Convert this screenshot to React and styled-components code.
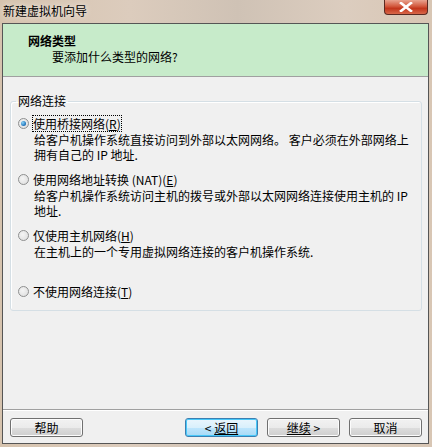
import React, { useState } from "react";
import styled, { createGlobalStyle } from "styled-components";

const GlobalStyle = createGlobalStyle`
  html, body {
    margin: 0;
    padding: 0;
  }
  body {
    font-family: "Noto Sans CJK SC", "Liberation Sans", sans-serif;
    font-size: 12px;
    color: #000;
  }
`;

const options = [
  {
    id: "bridge",
    label: "使用桥接网络",
    key: "R",
    desc: ["给客户机操作系统直接访问到外部以太网网络。 客户必须在外部网络上", "拥有自己的 IP 地址."],
  },
  {
    id: "nat",
    label: "使用网络地址转换 (NAT)",
    key: "E",
    desc: ["给客户机操作系统访问主机的拨号或外部以太网网络连接使用主机的 IP", "地址."],
  },
  {
    id: "host",
    label: "仅使用主机网络",
    key: "H",
    desc: ["在主机上的一个专用虚拟网络连接的客户机操作系统."],
    extra: true,
  },
  { id: "none", label: "不使用网络连接", key: "T", desc: [] },
];

function App() {
  const [selected, setSelected] = useState("bridge");

  return (
    <Window>
      <GlobalStyle />
      <TitleBar>
        <Title>新建虚拟机向导</Title>
        <CloseButton>
          <svg width="14" height="10" viewBox="0 0 14 10">
            <path d="M2 1 L12 9 M12 1 L2 9" stroke="#fff" strokeWidth="2.6" strokeLinecap="square" />
          </svg>
        </CloseButton>
      </TitleBar>
      <Client>
        <Header>
          <HeaderTitle>网络类型</HeaderTitle>
          <HeaderSub>要添加什么类型的网络?</HeaderSub>
        </Header>
        <Body>
          <Group>
            <Legend>网络连接</Legend>
            {options.map((opt) => (
              <Option key={opt.id} $gap={opt.extra ? 24 : 9}>
                <OptionRow onClick={() => setSelected(opt.id)}>
                  <Radio $on={selected === opt.id} />
                  <OptionLabel $focus={selected === opt.id}>
                    {opt.label}(<u>{opt.key}</u>)
                  </OptionLabel>
                </OptionRow>
                {opt.desc.map((line, i) => (
                  <Desc key={i}>{line}</Desc>
                ))}
              </Option>
            ))}
          </Group>
        </Body>
        <Footer>
          <Button>帮助</Button>
          <Spacer />
          <Button $default>
            {"< "}
            <u>返回</u>
          </Button>
          <Button>
            <u>继续</u>
            {" >"}
          </Button>
          <Button>取消</Button>
        </Footer>
      </Client>
    </Window>
  );
}

export default App;

const Window = styled.div`
  width: 432px;
  height: 447px;
  display: flex;
  flex-direction: column;
  background: linear-gradient(90deg, #d6c3ae 0%, #dcccbd 30%, #cfc2b5 55%, #dccdbf 80%, #d8c6b4 100%);
  box-sizing: border-box;
`;

const TitleBar = styled.div`
  height: 23px;
  display: flex;
  align-items: flex-start;
  flex-shrink: 0;
`;

const Title = styled.div`
  padding: 3px 0 0 3px;
  font-size: 12px;
  line-height: 16px;
  color: #000;
  text-shadow: 0 0 6px rgba(255, 255, 255, 0.9);
`;

const CloseButton = styled.div`
  margin-left: auto;
  margin-right: 4px;
  width: 44px;
  height: 15px;
  border: 1px solid #5a2a22;
  border-top: none;
  border-radius: 0 0 4px 4px;
  background: linear-gradient(180deg, #e8a38f 0%, #d2583d 45%, #c2361c 60%, #d8684a 100%);
  display: flex;
  align-items: center;
  justify-content: center;
  box-sizing: border-box;
`;

const Client = styled.div`
  flex: 1;
  margin: 0 3px 3px 2px;
  border: 1px solid #555;
  background: #f0f0f0;
  display: flex;
  flex-direction: column;
  min-height: 0;
`;

const Header = styled.div`
  height: 53px;
  background: #c7ebca;
  border-bottom: 1px solid #a0a0a0;
  padding: 10px 0 0 25px;
  box-sizing: border-box;
  flex-shrink: 0;
`;

const HeaderTitle = styled.div`
  font-weight: bold;
  line-height: 14px;
`;

const HeaderSub = styled.div`
  padding-left: 24px;
  margin-top: 1px;
  line-height: 16px;
`;

const Body = styled.div`
  flex: 1;
  padding: 17px 6px 0 7px;
`;

const Group = styled.fieldset`
  margin: 0;
  height: 217px;
  box-sizing: border-box;
  border: 1px solid #d5dfe5;
  border-radius: 3px;
  padding: 7px 0 0 7px;
  box-shadow: inset 1px 1px 0 #fff;
`;

const Legend = styled.legend`
  padding: 0 2px;
  margin-left: -2px;
  line-height: 14px;
`;

const Option = styled.div`
  margin-bottom: ${(p) => p.$gap}px;
`;

const OptionRow = styled.div`
  display: flex;
  align-items: center;
  gap: 4px;
  height: 17px;
  cursor: default;
`;

const Radio = styled.span`
  width: 11px;
  height: 11px;
  border-radius: 50%;
  border: 1px solid #8e8f8f;
  background: radial-gradient(circle at 40% 40%, #f4f4f4 0%, #dcdcdc 100%);
  box-sizing: border-box;
  display: flex;
  align-items: center;
  justify-content: center;
  &::after {
    content: "";
    display: ${(p) => (p.$on ? "block" : "none")};
    width: 5px;
    height: 5px;
    border-radius: 50%;
    background: radial-gradient(circle at 35% 35%, #8ad3f7 0%, #1b6fb8 70%, #104a83 100%);
  }
`;

const OptionLabel = styled.span`
  line-height: 15px;
  outline: ${(p) => (p.$focus ? "1px dotted #000" : "none")};
  u {
    text-underline-offset: 1px;
  }
`;

const Desc = styled.div`
  padding-left: 16px;
  height: 15px;
  line-height: 15px;
  white-space: nowrap;
`;

const Footer = styled.div`
  border-top: 1px solid #a0a0a0;
  box-shadow: inset 0 1px 0 #fff;
  height: 34px;
  display: flex;
  align-items: flex-start;
  gap: 9px;
  padding: 8px 6px 0 7px;
  box-sizing: border-box;
  flex-shrink: 0;
`;

const Spacer = styled.div`
  flex: 1;
`;

const Button = styled.div`
  width: 73px;
  height: 19px;
  box-sizing: border-box;
  border: 1px solid ${(p) => (p.$default ? "#3c7fb1" : "#707070")};
  border-radius: 3px;
  background: ${(p) =>
    p.$default
      ? "linear-gradient(180deg, #eaf6fd 0%, #d9f0fc 50%, #bee6fd 51%, #a7d9f5 100%)"
      : "linear-gradient(180deg, #f2f2f2 0%, #ebebeb 50%, #dddddd 51%, #cfcfcf 100%)"};
  box-shadow: inset 0 0 0 1px ${(p) => (p.$default ? "#48c8f9" : "#fcfcfc")};
  display: flex;
  align-items: center;
  justify-content: center;
  white-space: pre;
  line-height: 14px;
  font-size: 12px;
  u {
    text-underline-offset: 1px;
  }
`;
